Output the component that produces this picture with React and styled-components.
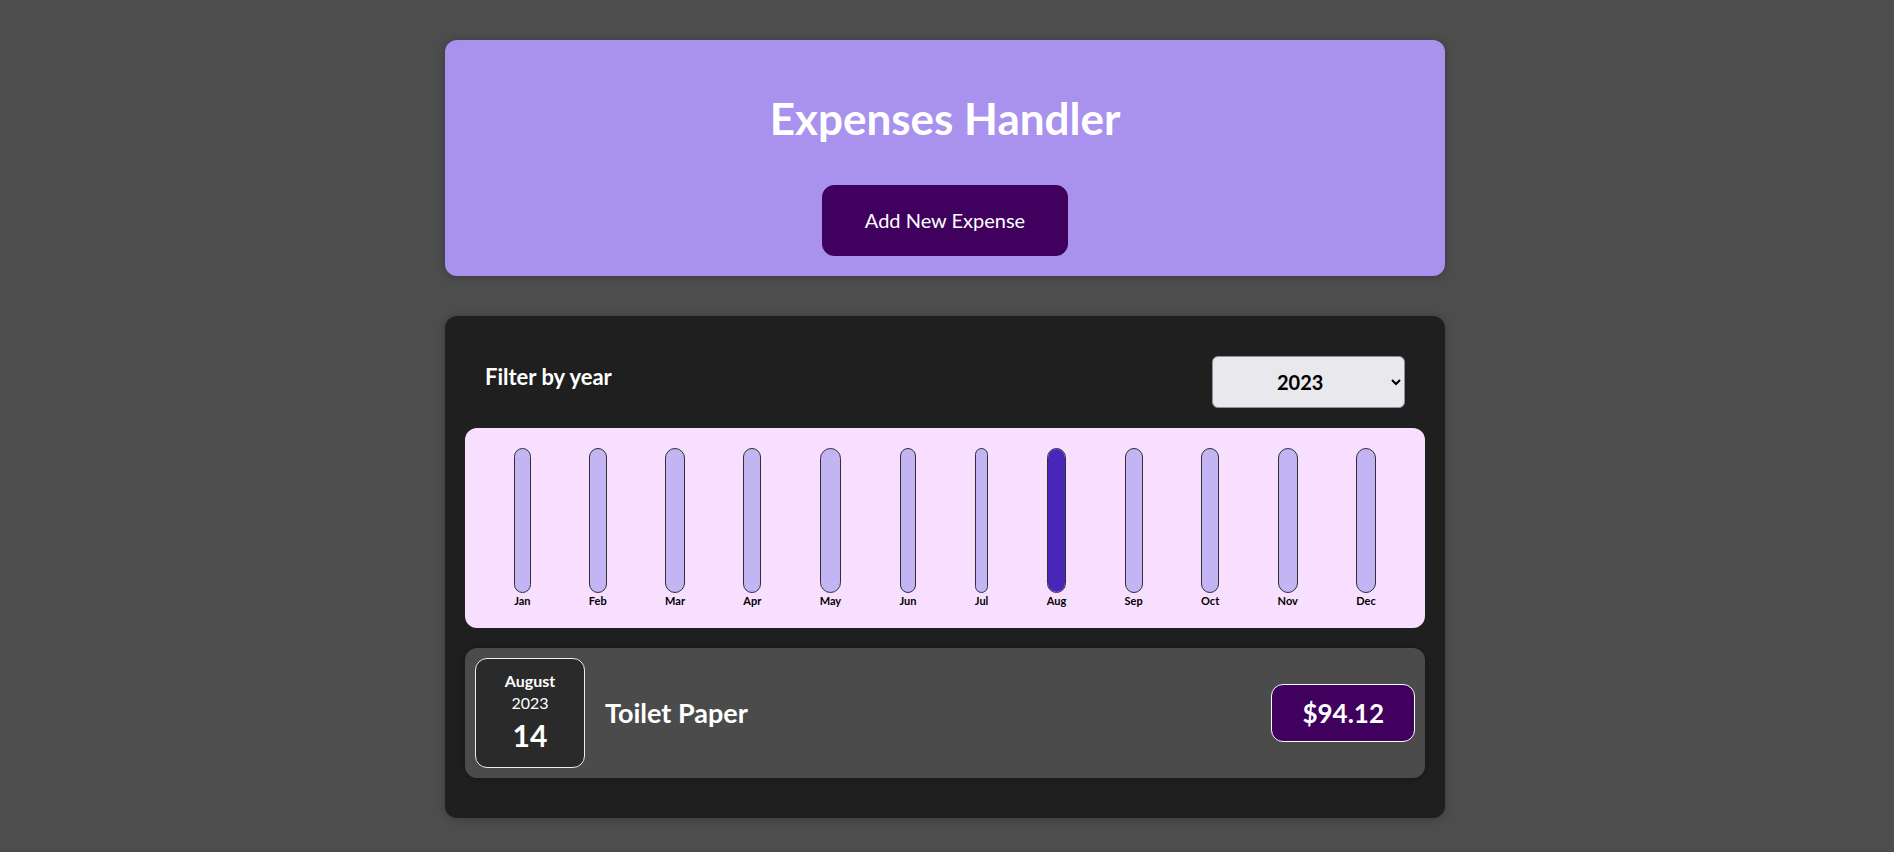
import React, { useState } from "react";
import styled, { createGlobalStyle } from "styled-components";

const GlobalStyle = createGlobalStyle`
  * {
    box-sizing: border-box;
  }

  html {
    font-family: Lato, "Noto Sans", sans-serif;
    font-size: 20px;
    line-height: 1.45;
  }

  body {
    margin: 0;
    padding-right: 4px;
    background-color: #4d4d4d;
  }
`;

const Card = styled.div`
  border-radius: 12px;
  box-shadow: 0 1px 8px rgba(0, 0, 0, 0.25);
`;

const NewExpense = styled(Card)`
  background-color: #a892ee;
  padding: 1rem;
  margin: 2rem auto;
  width: 50rem;
  max-width: 95%;
  text-align: center;
`;

const Title = styled.h1`
  margin: 26px 0 35px;
  font-size: 2.2rem;
  line-height: 64px;
  font-weight: 700;
  color: #fff;
`;

const Button = styled.button`
  font: inherit;
  cursor: pointer;
  padding: 1rem 2.1rem;
  border: 1px solid #40005d;
  background-color: #40005d;
  color: #fff;
  border-radius: 12px;

  &:hover {
    background-color: #510674;
  }
`;

const Expenses = styled(Card)`
  padding: 1rem;
  background-color: #1f1f1f;
  margin: 2rem auto;
  width: 50rem;
  max-width: 95%;
`;

const Filter = styled.div`
  color: #fff;
  padding: 0 1rem;
`;

const FilterControl = styled.div`
  display: flex;
  width: 100%;
  align-items: center;
  justify-content: space-between;
  margin: 1rem 0;
`;

const FilterLabel = styled.label`
  font-weight: 700;
  font-size: 22px;
  margin-bottom: 0.5rem;
`;

const Select = styled.select`
  font: inherit;
  height: 52px;
  width: 193px;
  padding: 0 3rem;
  font-weight: 700;
  border-radius: 6px;
  background-color: #e9e8ed;
  color: #000;
  border: 1px solid #8f8f9d;
`;

const Chart = styled.div`
  padding: 1rem;
  border-radius: 12px;
  background-color: #f8dfff;
  text-align: center;
  display: flex;
  justify-content: space-around;
  height: 10rem;
`;

const ChartBar = styled.div`
  height: 100%;
  display: flex;
  flex-direction: column;
  align-items: center;
`;

const BarInner = styled.div`
  height: 100%;
  width: 100%;
  border: 1px solid #313131;
  border-radius: 12px;
  background-color: #c3b4f3;
  overflow: hidden;
  display: flex;
  flex-direction: column;
  justify-content: flex-end;
`;

const BarFill = styled.div`
  background-color: #4826b9;
  width: 100%;
  transition: all 0.3s ease-out;
`;

const BarLabel = styled.div`
  font-weight: 700;
  font-size: 11px;
  line-height: 15px;
  color: #000;
`;

const ExpenseItem = styled(Card)`
  display: flex;
  justify-content: space-between;
  align-items: center;
  padding: 0.5rem;
  margin: 1rem 0;
  background-color: #4b4b4b;
`;

const DateBox = styled.div`
  display: flex;
  flex-direction: column;
  width: 5.5rem;
  height: 5.5rem;
  border: 1px solid #ececec;
  background-color: #2a2a2a;
  color: #fff;
  border-radius: 12px;
  align-items: center;
  justify-content: center;
`;

const DatePart = styled.div`
  font-size: ${(p) => (p.$day ? "1.5rem" : "16px")};
  line-height: ${(p) => (p.$day ? "43px" : "22px")};
  font-weight: ${(p) => (p.$bold ? 700 : 400)};
`;

const Description = styled.div`
  display: flex;
  align-items: center;
  justify-content: flex-start;
  flex: 1;
`;

const ItemTitle = styled.h2`
  font-size: 27px;
  flex: 1;
  margin: 0 1rem;
  color: #fff;
`;

const Price = styled.div`
  font-size: 1.3rem;
  line-height: 36px;
  font-weight: 700;
  color: #fff;
  background-color: #40005d;
  border: 1px solid #fff;
  padding: 0.5rem 1.5rem;
  border-radius: 12px;
`;

const MONTHS = ["Jan", "Feb", "Mar", "Apr", "May", "Jun", "Jul", "Aug", "Sep", "Oct", "Nov", "Dec"];

const expenses = [
  { id: "e1", title: "Toilet Paper", amount: 94.12, date: new Date(2023, 7, 14) },
];

const ExpenseChart = ({ items }) => {
  const values = MONTHS.map(() => 0);
  items.forEach((e) => {
    values[e.date.getMonth()] += e.amount;
  });
  const max = Math.max(...values);

  return (
    <Chart>
      {MONTHS.map((m, i) => (
        <ChartBar key={m}>
          <BarInner>
            <BarFill style={{ height: max > 0 ? Math.round((values[i] / max) * 100) + "%" : "0%" }} />
          </BarInner>
          <BarLabel>{m}</BarLabel>
        </ChartBar>
      ))}
    </Chart>
  );
};

const ExpenseDate = ({ date }) => (
  <DateBox>
    <DatePart $bold>{date.toLocaleString("en-US", { month: "long" })}</DatePart>
    <DatePart>{date.getFullYear()}</DatePart>
    <DatePart $bold $day>
      {date.toLocaleString("en-US", { day: "2-digit" })}
    </DatePart>
  </DateBox>
);

const App = () => {
  const [year, setYear] = useState("2023");
  const filtered = expenses.filter((e) => e.date.getFullYear().toString() === year);

  return (
    <>
      <GlobalStyle />
      <NewExpense>
        <Title>Expenses Handler</Title>
        <Button>Add New Expense</Button>
      </NewExpense>
      <Expenses>
        <Filter>
          <FilterControl>
            <FilterLabel>Filter by year</FilterLabel>
            <Select value={year} onChange={(e) => setYear(e.target.value)}>
              <option value="2023">2023</option>
              <option value="2022">2022</option>
              <option value="2021">2021</option>
              <option value="2020">2020</option>
            </Select>
          </FilterControl>
        </Filter>
        <ExpenseChart items={filtered} />
        {filtered.map((e) => (
          <ExpenseItem key={e.id}>
            <ExpenseDate date={e.date} />
            <Description>
              <ItemTitle>{e.title}</ItemTitle>
              <Price>${e.amount}</Price>
            </Description>
          </ExpenseItem>
        ))}
      </Expenses>
    </>
  );
};

export default App;
